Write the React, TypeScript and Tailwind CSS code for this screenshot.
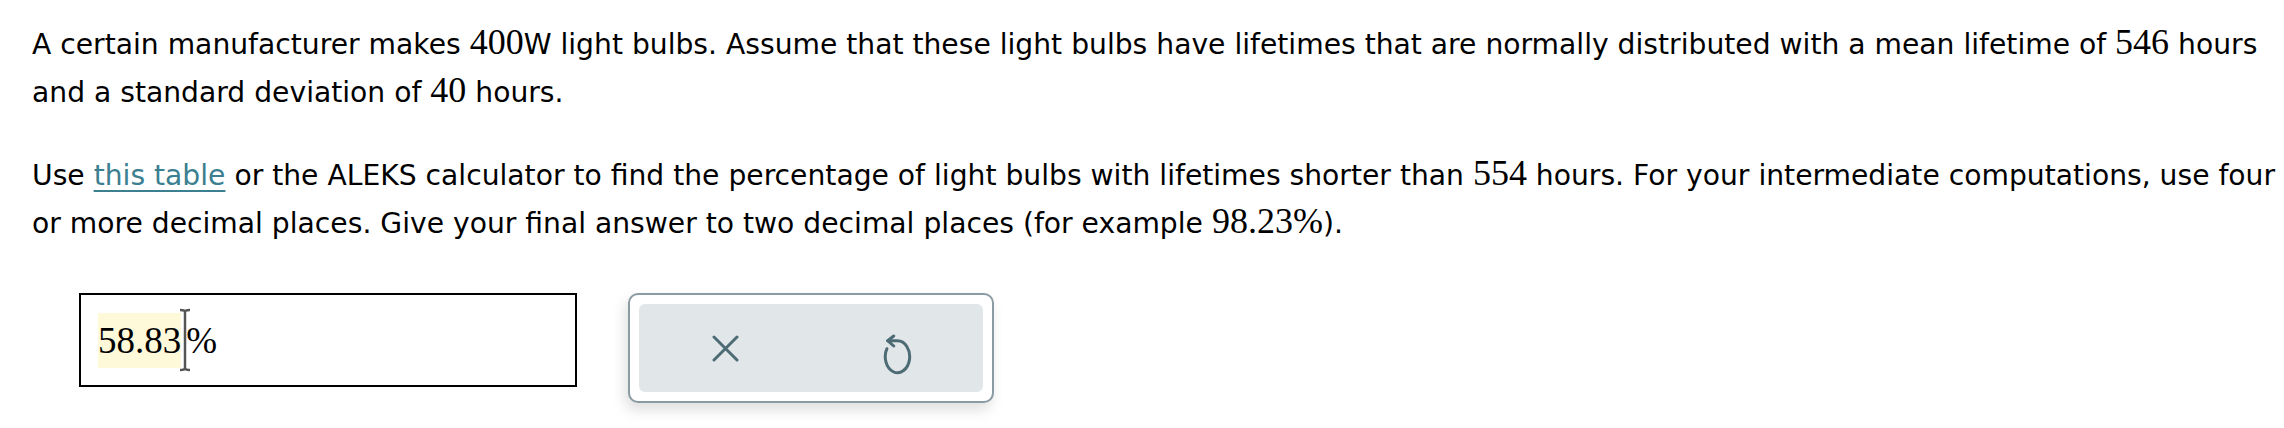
import React from "react";

function M({ children }: { children: React.ReactNode }) {
  return (
    <span className="font-['Liberation_Serif',serif] text-[36px] leading-none">
      {children}
    </span>
  );
}

function XIcon() {
  return (
    <svg width="27" height="27" viewBox="-2 -2 27 27" fill="none">
      <path
        d="M0 0L23 23M23 0L0 23"
        stroke="#4d6b75"
        strokeWidth="3"
        strokeLinecap="round"
      />
    </svg>
  );
}

function UndoIcon() {
  return (
    <svg
      width="31"
      height="42"
      viewBox="-3 -3 31 42"
      fill="none"
      className="mt-[14px]"
    >
      <path
        d="M2.7 3.7H12.5A12.2 16 0 1 1 1.9 11.7"
        stroke="#4d6b75"
        strokeWidth="3"
        strokeLinecap="round"
        strokeLinejoin="round"
      />
      <path
        d="M8.7 -1L2.7 3.7L8.7 9"
        stroke="#4d6b75"
        strokeWidth="3"
        strokeLinecap="round"
        strokeLinejoin="round"
      />
    </svg>
  );
}

function IBeam() {
  return (
    <svg width="14" height="64" viewBox="0 0 14 64" className="-ml-[3px] -mr-[6px]">
      <path
        d="M7 3V61M2 2Q7 2 7 4Q7 2 12 2M2 62Q7 62 7 60Q7 62 12 62"
        stroke="#555"
        strokeWidth="2.5"
        fill="none"
      />
    </svg>
  );
}

export default function App() {
  return (
    <main className="h-[428px] w-full bg-white pl-[32px] pt-[21px] font-['DejaVu_Sans',sans-serif] text-[28.2px] leading-[48px] text-black">
      <p className="mb-[35px]">
        A certain manufacturer makes <M>400</M>W light bulbs. Assume that these
        light bulbs have lifetimes that are normally distributed with a mean
        lifetime of <M>546</M> hours and a standard deviation of <M>40</M>{" "}
        hours.
      </p>
      <p>
        Use{" "}
        <a className="text-[#3b7f90] underline underline-offset-[5px] decoration-2">
          this table
        </a>{" "}
        or the ALEKS calculator to find the percentage of light bulbs with
        lifetimes shorter than <M>554</M> hours. For your intermediate
        computations, use four or more decimal places. Give your final answer to
        two decimal places (for example <M>98.23%</M>).
      </p>

      <div className="ml-[47px] mt-[45px] flex items-start gap-[51px]">
        <div className="flex h-[94px] w-[498px] items-center border-2 border-black pl-[17px] font-['Liberation_Serif',serif] text-[37px]">
          <span className="bg-[#fdf9d9] leading-[55px]">58.83</span>
          <IBeam />
          <span className="leading-[55px]">%</span>
        </div>

        <div className="rounded-[10px] border-2 border-[#8a9ba3] bg-white p-[9px] shadow-[-3px_7px_14px_rgba(0,0,0,0.13)]">
          <div className="flex h-[88px] w-[344px] rounded-[6px] bg-[#e1e6e9]">
            <button className="flex flex-1 items-center justify-center">
              <XIcon />
            </button>
            <button className="flex flex-1 items-center justify-center">
              <UndoIcon />
            </button>
          </div>
        </div>
      </div>
    </main>
  );
}
